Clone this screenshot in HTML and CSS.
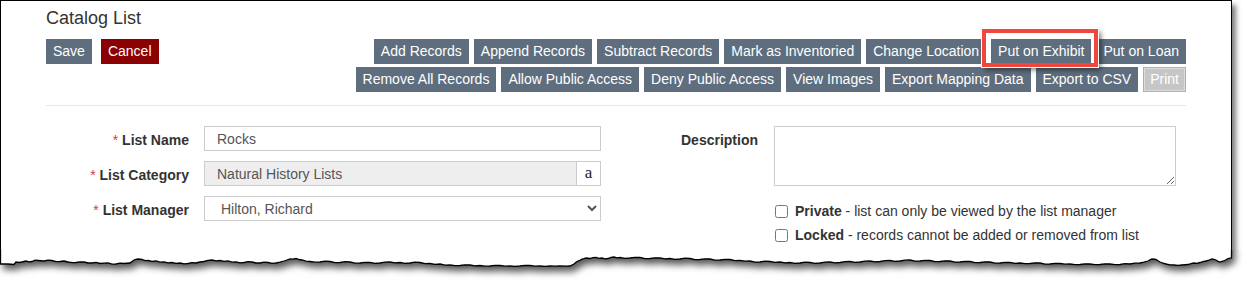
FILE: index.html
```html
<!DOCTYPE html>
<html lang="en">
<head>
<meta charset="utf-8">
<title>Catalog List</title>
<link rel="stylesheet" href="styles.css">
</head>
<body>
<div class="sheet">
  <div class="frame">
    <h1 class="title">Catalog List</h1>
    <div class="toolbar">
      <div class="primary">
        <button type="button" class="btn">Save</button>
        <button type="button" class="btn btn-danger">Cancel</button>
      </div>
      <div class="actions">
        <div class="action-row">
          <button type="button" class="btn">Add Records</button>
          <button type="button" class="btn">Append Records</button>
          <button type="button" class="btn">Subtract Records</button>
          <button type="button" class="btn">Mark as Inventoried</button>
          <button type="button" class="btn">Change Location</button>
          <button type="button" class="btn">Put on Exhibit</button>
          <button type="button" class="btn">Put on Loan</button>
        </div>
        <div class="action-row">
          <button type="button" class="btn">Remove All Records</button>
          <button type="button" class="btn">Allow Public Access</button>
          <button type="button" class="btn">Deny Public Access</button>
          <button type="button" class="btn">View Images</button>
          <button type="button" class="btn">Export Mapping Data</button>
          <button type="button" class="btn">Export to CSV</button>
          <button type="button" class="btn btn-disabled">Print</button>
        </div>
      </div>
    </div>
    <hr class="divider">
    <form class="form">
      <div class="col-left">
        <div class="field">
          <label class="label"><span class="req">*</span> List Name</label>
          <input class="control" type="text" value="Rocks">
        </div>
        <div class="field">
          <label class="label"><span class="req">*</span> List Category</label>
          <div class="group">
            <input class="control control-readonly" type="text" value="Natural History Lists" readonly>
            <span class="addon">a</span>
          </div>
        </div>
        <div class="field">
          <label class="label"><span class="req">*</span> List Manager</label>
          <select class="control select">
            <option>Hilton, Richard</option>
          </select>
        </div>
      </div>
      <div class="col-right">
        <div class="field field-wide">
          <label class="label">Description</label>
          <textarea class="control textarea"></textarea>
        </div>
        <div class="checks">
          <label class="check"><input type="checkbox" class="box"><span><b>Private</b> - list can only be viewed by the list manager</span></label>
          <label class="check"><input type="checkbox" class="box"><span><b>Locked</b> - records cannot be added or removed from list</span></label>
        </div>
      </div>
    </form>
  </div>
  <div class="callout"></div>
  <svg class="torn" width="1247" height="32" viewBox="0 0 1247 32" xmlns="http://www.w3.org/2000/svg">
    <defs>
      <filter id="tornShadow" filterUnits="userSpaceOnUse" x="-10" y="-40" width="1270" height="90">
        <feDropShadow dx="3" dy="5" stdDeviation="3.5" flood-color="#000" flood-opacity="0.65"/>
      </filter>
    </defs>
    <rect x="0" y="0" width="1247" height="32" fill="#fff"/>
    <path filter="url(#tornShadow)" fill="#fff" stroke="#000" stroke-width="1.3" stroke-linejoin="miter"
      d="M0.5,-30 L0.5,14 L8,14 L14,14.5 L16,12 L19,12.5 L22,12 L26,11 L29,11.8 L32,11.5 L35,10.2 L38,10.5 L44,11 L48,10.2 L52,10.5 L56,11.6 L60,11.5 L64,11 L68,12 L72,12.6 L76,12.5 L80,11.8 L84,12 L88,13 L92,13 L96,12.4 L100,13.5 L104,13.2 L108,13 L112,14.2 L116,14 L120,13.2 L124,13.5 L130,13 L134,10 L136,9.4 L138,9 L142,9.5 L145,10.6 L148,10.5 L152,11.3 L156,11 L160,12.2 L164,12 L168,12.8 L172,12.5 L176,13.3 L180,13 L184,13.8 L188,13.5 L192,12.7 L196,13 L200,12 L204,11.5 L208,10.4 L212,10 L216,10.8 L220,10.5 L224,11.4 L228,11 L232,12.2 L236,12 L240,12.8 L244,12.5 L248,11.7 L252,12 L256,13 L260,13 L264,12.2 L268,12.5 L272,13.4 L276,13 L280,12.2 L284,11 L287,10 L290,9 L293,9.2 L296,8.5 L299,9.5 L302,10 L306,11.2 L310,11.5 L315,12.2 L320,12 L325,11.2 L330,11.5 L335,12.6 L340,12.5 L345,11.7 L350,12 L355,13.2 L360,13 L365,12.3 L370,12.5 L375,13.3 L380,13 L385,12.1 L390,12 L395,12.8 L400,12.5 L405,13.3 L410,13 L415,12.2 L420,12.5 L425,13.6 L430,13.5 L435,14.3 L440,14 L445,15.1 L450,15 L455,15.7 L460,15.5 L465,14.8 L470,15 L475,15.8 L480,15.5 L485,16.2 L490,16 L495,15.3 L500,15.5 L505,16.2 L510,16 L515,16.3 L520,16 L525,15.4 L530,15.5 L535,16.2 L540,16 L545,16.3 L550,16 L555,16.2 L560,16 L566,16.1 L570,16 L574,14 L576,12.2 L578,11 L580,10.3 L582,9 L584,8.6 L586,8 L590,8.5 L593,7.6 L596,7.5 L599,8.4 L602,8 L605,8.8 L608,8.5 L611,7.4 L614,7 L617,7.8 L620,7.5 L625,8.3 L630,8 L635,7.3 L640,7.5 L645,8.6 L650,8.5 L655,7.8 L660,8 L665,8.8 L670,8.5 L675,9.3 L680,9 L685,8.2 L690,8.5 L695,9.6 L700,9.5 L705,8.8 L710,9 L715,10.2 L720,10 L725,9.3 L730,9.5 L735,10.6 L740,10.5 L745,11.2 L750,11 L755,12.1 L760,12 L765,11.2 L770,11.5 L775,12.3 L780,12 L785,12.8 L790,12.5 L795,13.3 L800,13 L805,12.2 L810,12.5 L815,13.4 L820,13 L825,12.1 L830,12 L835,12.8 L840,12.5 L845,11.6 L850,11.5 L855,12.3 L860,12 L865,11.2 L870,11 L875,11.8 L880,11.5 L885,10.6 L890,10.5 L895,11.3 L900,11 L905,10.2 L910,10 L915,11.1 L920,11 L925,10.3 L930,10.5 L935,11.6 L940,11.5 L945,10.8 L950,11 L955,12.1 L960,12 L965,11.3 L970,11.5 L975,12.6 L980,12.5 L985,11.8 L990,12 L995,13.1 L1000,13 L1005,12.3 L1010,12.5 L1015,13.3 L1020,13 L1025,13.7 L1030,13.5 L1035,12.8 L1040,13 L1045,14.1 L1050,14 L1055,13.3 L1060,13.5 L1065,14.2 L1070,14 L1075,14.7 L1080,14.5 L1085,13.8 L1090,14 L1095,14.7 L1100,14.5 L1105,13.8 L1110,14 L1115,14.6 L1120,14.5 L1125,13.7 L1130,14 L1135,13.2 L1140,13 L1144,12.2 L1148,11 L1150,9.8 L1152,9 L1156,9.5 L1158,10.8 L1160,12 L1163,13.2 L1166,14 L1170,14.8 L1174,15 L1178,15.3 L1182,15 L1188,14.5 L1191,13.6 L1194,13 L1197,13.3 L1200,12.5 L1203,11.6 L1206,11 L1209,10.2 L1212,9 L1214,9.4 L1216,10 L1218,11.3 L1220,12 L1222,11.4 L1224,11 L1226,9.8 L1228,8.5 L1231.5,8 L1231.5,-30 Z"/>
  </svg>
</div>
</body>
</html>
```
FILE: styles.css
```css
html, body {
  margin: 0;
  padding: 0;
  background: #fff;
  overflow: hidden;
}

body {
  font-family: "Liberation Sans", Arial, sans-serif;
  font-size: 14px;
  color: #333;
}

.sheet {
  position: relative;
  width: 1247px;
  height: 282px;
}

.frame {
  box-sizing: border-box;
  width: 1232px;
  height: 270px;
  border: 1px solid #000;
  border-bottom: 0;
  padding: 7px 45px 0 45px;
  background: #fff;
  box-shadow: 4px 5px 5px rgba(0, 0, 0, 0.5);
}

.title {
  margin: 0;
  font-size: 18px;
  font-weight: normal;
  line-height: 20px;
  color: #333;
}

.toolbar {
  display: flex;
  justify-content: space-between;
  align-items: flex-start;
  margin-top: 11px;
}

.primary {
  display: flex;
  gap: 9px;
}

.actions {
  display: flex;
  flex-direction: column;
  gap: 3px;
}

.action-row {
  display: flex;
  justify-content: flex-end;
  gap: 5px;
}

.btn {
  box-sizing: border-box;
  height: 25px;
  margin: 0;
  padding: 0 7px;
  border: 0;
  border-radius: 0;
  background: #5e6e7e;
  color: #fff;
  font-family: "Liberation Sans", Arial, sans-serif;
  font-size: 14px;
  line-height: 25px;
  white-space: nowrap;
}

.btn-danger {
  background: #8b0000;
}

.btn-disabled {
  background: #c6c6c6;
  border: 1px solid #b0b0b0;
  box-shadow: inset 0 0 0 1px #dcdcdc;
  padding: 0 6px;
  line-height: 23px;
}

.divider {
  margin: 13px 0 0;
  height: 0;
  border: 0;
  border-top: 1px solid #e8e8e8;
}

.form {
  display: grid;
  grid-template-columns: 555px 1fr;
  margin-top: 20px;
}

.col-left {
  display: flex;
  flex-direction: column;
  gap: 10px;
}

.field {
  display: grid;
  grid-template-columns: 143px 397px;
  column-gap: 15px;
  align-items: start;
}

.field-wide {
  grid-template-columns: 157px 402px;
  column-gap: 16px;
}

.label {
  text-align: right;
  font-weight: bold;
  line-height: 20px;
  padding-top: 4px;
  color: #333;
}

.req {
  color: #e0353b;
  font-weight: normal;
}

.control {
  box-sizing: border-box;
  width: 100%;
  height: 25px;
  margin: 0;
  padding: 0 12px;
  border: 1px solid #cccccc;
  border-radius: 0;
  background: #fff;
  font-family: "Liberation Sans", Arial, sans-serif;
  font-size: 14px;
  color: #555;
  outline: none;
}

.group {
  display: flex;
}

.control-readonly {
  flex: 1;
  width: auto;
  min-width: 0;
  background: #eeeeee;
}

.addon {
  box-sizing: border-box;
  width: 24px;
  height: 25px;
  border: 1px solid #cccccc;
  border-left: 0;
  background: #fff;
  font-family: "Liberation Serif", "Times New Roman", serif;
  font-size: 17px;
  line-height: 21px;
  text-align: center;
  color: #222;
}

.select {
  padding-left: 12px;
}

.textarea {
  height: 60px;
  padding: 6px 12px;
  resize: vertical;
  display: block;
}

.checks {
  display: flex;
  flex-direction: column;
  gap: 4px;
  margin: 15px 0 0 174px;
}

.check {
  display: flex;
  align-items: center;
  gap: 7px;
  height: 20px;
  line-height: 20px;
  color: #333;
}

.box {
  width: 13px;
  height: 13px;
  margin: 0;
}

.callout {
  position: absolute;
  left: 982px;
  top: 29px;
  width: 116px;
  height: 38px;
  box-sizing: border-box;
  border: 4px solid #f0473d;
  box-shadow: inset 5px 0 0 #fff, inset -3px 0 0 #fff, 0 0 0 1px #fff, 3px 3px 5px rgba(0, 0, 0, 0.5);
}

.torn {
  position: absolute;
  left: 0;
  top: 250px;
  display: block;
}
```
